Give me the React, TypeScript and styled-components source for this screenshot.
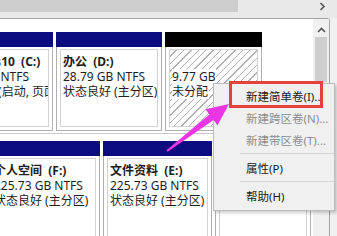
import React from "react";
import styled, { createGlobalStyle } from "styled-components";

const Global = createGlobalStyle`
  html, body { margin: 0; padding: 0; background: #fff; }
  body { font-family: "Noto Sans", "Noto Sans CJK SC", sans-serif; }
`;

const Screen = styled.div`
  position: relative;
  width: 337px;
  height: 236px;
  overflow: hidden;
  background: #f0f0f0;
  display: flex;
  flex-direction: column;
  font-family: "Noto Sans", "Noto Sans CJK SC", sans-serif;
  font-size: 12px;
  color: #1e1e1e;
`;

const HScroll = styled.div`
  height: 18px;
  flex: none;
  display: flex;
  align-items: flex-start;
  background: #e9e9e9;
`;

const HThumb = styled.div`
  width: 238px;
  height: 12px;
  background: #cdcdcd;
`;

const HTrack = styled.div`
  flex: 1;
  display: flex;
  justify-content: flex-end;
  padding: 2px 11px 0 0;
`;

const Pane = styled.div`
  flex: 1;
  display: flex;
  margin-right: 7px;
  background: #fff;
  border-top: 1px solid #a3a3a3;
  border-right: 1px solid #a3a3a3;
  border-top-right-radius: 3px;
  min-height: 0;
`;

const Content = styled.div`
  width: 313px;
  flex: none;
  overflow: hidden;
  padding-top: 13px;
`;

const VScroll = styled.div`
  flex: 1;
  background: #f0f0f0;
  display: flex;
  flex-direction: column;
  align-items: center;
  padding-top: 8px;
  gap: 4px;
`;

const VThumb = styled.div`
  width: 12px;
  height: 45px;
  background: #cdcdcd;
`;

const RowBlock = styled.div<{ $last?: boolean }>`
  padding-bottom: ${(p) => (p.$last ? 0 : 2)}px;
  border-bottom: ${(p) => (p.$last ? "none" : "1px solid #c8c8c8")};
  margin-bottom: 7px;
`;

const DiskRow = styled.div<{ $offset: number; $h: number }>`
  display: flex;
  gap: 3px;
  margin-left: ${(p) => p.$offset}px;
  height: ${(p) => p.$h}px;
`;

const Column = styled.div<{ $w: number }>`
  width: ${(p) => p.$w}px;
  flex: none;
  display: flex;
  flex-direction: column;
`;

const Header = styled.div<{ $color: string }>`
  height: 15px;
  flex: none;
  background: ${(p) => p.$color};
`;

const Body = styled.div`
  flex: 1;
  display: flex;
  border: 1px solid #b0b0b0;
  border-top: none;
  padding: 2px 3px 3px;
  min-height: 0;
`;

const Inner = styled.div<{ $hatch?: boolean }>`
  flex: 1;
  border: 1px solid #d2d2d2;
  padding: 4px 2px 0;
  overflow: hidden;
  background: ${(p) =>
    p.$hatch
      ? "repeating-linear-gradient(135deg, #ffffff 0 4.2px, #b0b0b0 4.2px 5.2px)"
      : "#fff"};
`;

const Line = styled.div<{ $bold?: boolean; $boxed?: boolean }>`
  white-space: pre;
  height: 15px;
  line-height: 15px;
  font-weight: ${(p) => (p.$bold ? 700 : 400)};
  width: ${(p) => (p.$boxed ? "fit-content" : "auto")};
  background: ${(p) => (p.$boxed ? "#fff" : "transparent")};
  padding-right: ${(p) => (p.$boxed ? 1 : 0)}px;
`;

const Menu = styled.div`
  position: absolute;
  left: 213px;
  top: 83px;
  width: 122px;
  box-sizing: border-box;
  background: #f0f0f0;
  border: 1px solid #bdbdbd;
  box-shadow: 2px 2px 3px rgba(0, 0, 0, 0.2);
  padding: 2px 0;
  font-size: 11.5px;
`;

const Item = styled.div<{ $disabled?: boolean }>`
  height: 22px;
  line-height: 22px;
  padding-left: 32px;
  white-space: pre;
  color: ${(p) => (p.$disabled ? "#8d8d8d" : "#1a1a1a")};
`;

const Separator = styled.div`
  height: 6px;
  padding-top: 1px;
  box-sizing: border-box;
  margin-left: 26px;
  &::before {
    content: "";
    display: block;
    height: 1px;
    background: #d5d5d5;
  }
`;

const Highlight = styled.div`
  position: absolute;
  left: 229px;
  top: 81px;
  width: 94px;
  height: 27px;
  box-sizing: border-box;
  border: 3px solid #e5413f;
`;

const Overlay = styled.svg`
  position: absolute;
  left: 0;
  top: 0;
  pointer-events: none;
`;

type Part = {
  w: number;
  color: string;
  lines: string[];
  unalloc?: boolean;
};

const row1: Part[] = [
  {
    w: 113,
    color: "#0c0c80",
    lines: ["Windows10  (C:)", "59.90 GB NTFS", "状态良好 (启动, 页面文件, 故障转储, 主分区)"],
  },
  { w: 106, color: "#0c0c80", lines: ["办公  (D:)", "28.79 GB NTFS", "状态良好 (主分区)"] },
  { w: 97, color: "#000", lines: ["", "9.77 GB", "未分配"], unalloc: true },
];

const row2: Part[] = [
  { w: 113, color: "#0c0c80", lines: ["个人空间  (F:)", "225.73 GB NTFS", "状态良好 (主分区)"] },
  { w: 109, color: "#0c0c80", lines: ["文件资料  (E:)", "225.73 GB NTFS", "状态良好 (主分区)"] },
  { w: 96, color: "#0c0c80", lines: ["软件  (G:)", "225.73 GB NTFS", "状态良好 (主分区)"] },
];

const Partition = ({ p }: { p: Part }) => (
  <Column $w={p.w}>
    <Header $color={p.color} />
    <Body>
      <Inner $hatch={p.unalloc}>
        {p.lines.map((t, i) => (
          <Line key={i} $bold={i === 0 && !p.unalloc} $boxed={p.unalloc && t !== ""}>
            {t}
          </Line>
        ))}
      </Inner>
    </Body>
  </Column>
);

export default function App() {
  return (
    <Screen>
      <Global />
      <HScroll>
        <HThumb />
        <HTrack>
          <svg width="7" height="9" viewBox="0 0 7 9">
            <polyline points="1.5,1 5,4.5 1.5,8" fill="none" stroke="#555" strokeWidth="1.6" />
          </svg>
        </HTrack>
      </HScroll>
      <Pane>
        <Content>
          <RowBlock>
            <DiskRow $offset={-60} $h={99}>
              {row1.map((p, i) => (
                <Partition key={i} p={p} />
              ))}
            </DiskRow>
          </RowBlock>
          <RowBlock $last>
            <DiskRow $offset={-13} $h={110}>
              {row2.map((p, i) => (
                <Partition key={i} p={p} />
              ))}
            </DiskRow>
          </RowBlock>
        </Content>
        <VScroll>
          <svg width="9" height="6" viewBox="0 0 9 6">
            <polyline points="1,5 4.5,1.5 8,5" fill="none" stroke="#555" strokeWidth="1.6" />
          </svg>
          <VThumb />
        </VScroll>
      </Pane>
      <Menu>
        <Item>新建简单卷(I)...</Item>
        <Item $disabled>新建跨区卷(N)...</Item>
        <Item $disabled>新建带区卷(T)...</Item>
        <Separator />
        <Item>属性(P)</Item>
        <Separator />
        <Item>帮助(H)</Item>
      </Menu>
      <Highlight />
      <Overlay width="337" height="236" viewBox="0 0 337 236">
        <polygon
          points="166.4,150.2 209.4,114.5 205.5,109.3 229,104 217.5,125.3 213.6,120.1 167.6,151.8"
          fill="#ea35e4"
        />
      </Overlay>
    </Screen>
  );
}
